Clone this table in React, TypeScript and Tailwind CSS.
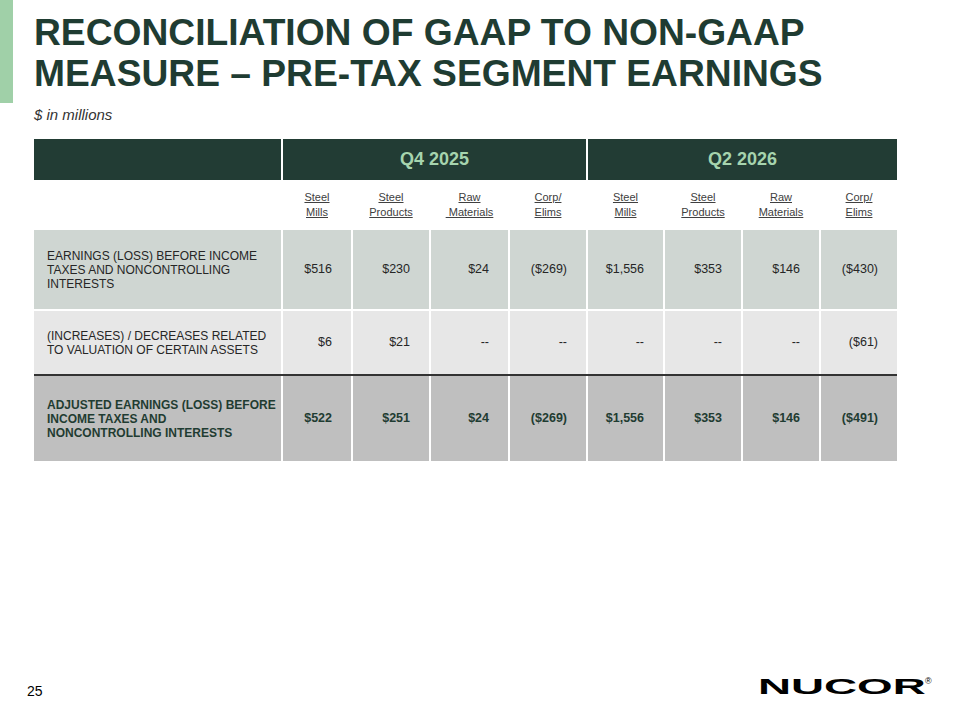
import React from 'react';

type Row = {
  label: string[];
  values: string[];
  kind: 'base' | 'adj' | 'total';
};

const SUB_COLS = [
  ['Steel', 'Mills'],
  ['Steel', 'Products'],
  ['Raw', '\u00a0Materials'],
  ['Corp/', 'Elims'],
  ['Steel', 'Mills'],
  ['Steel', 'Products'],
  ['Raw', 'Materials'],
  ['Corp/', 'Elims'],
];

const ROWS: Row[] = [
  {
    label: ['EARNINGS (LOSS) BEFORE INCOME', 'TAXES AND NONCONTROLLING', 'INTERESTS'],
    values: ['$516', '$230', '$24', '($269)', '$1,556', '$353', '$146', '($430)'],
    kind: 'base',
  },
  {
    label: ['(INCREASES) / DECREASES RELATED', 'TO VALUATION OF CERTAIN ASSETS'],
    values: ['$6', '$21', '--', '--', '--', '--', '--', '($61)'],
    kind: 'adj',
  },
  {
    label: ['ADJUSTED EARNINGS (LOSS) BEFORE', 'INCOME TAXES AND', 'NONCONTROLLING INTERESTS'],
    values: ['$522', '$251', '$24', '($269)', '$1,556', '$353', '$146', '($491)'],
    kind: 'total',
  },
];

const GRID = 'grid grid-cols-[247px_68px_76px_77px_76px_75px_76px_76px_76px] gap-x-[2px]';

const rowStyle = {
  base: { wrap: 'h-[79px]', cell: 'bg-[#cfd6d2] text-[#262626]' },
  adj: { wrap: 'h-[63px]', cell: 'bg-[#e7e7e7] text-[#262626]' },
  total: { wrap: 'h-[85px]', cell: 'bg-[#bfbfbf] text-[#1f3c32] font-bold' },
};

// wordmark: wide bold letters, stretched horizontally
const NucorLogo = () => (
  <svg width="180" height="22" viewBox="0 0 180 22" overflow="visible">
    <g transform="scale(2.08,1)">
      <text
        x="0"
        y="19"
        fontFamily="'Liberation Sans', Arial, sans-serif"
        fontWeight="900"
        fontSize="22"
        fill="#000"
      >
        NUCOR
      </text>
    </g>
    <text x="167" y="9" fontFamily="'Liberation Sans', Arial, sans-serif" fontSize="9" fill="#000">
      ®
    </text>
  </svg>
);

export default function App() {
  return (
    <div className="w-[960px] h-[720px] flex flex-col bg-white font-['Liberation_Sans',Arial,sans-serif] overflow-hidden">
      {/* title block */}
      <div className="flex">
        <div className="w-[13px] h-[103px] bg-[#a0d0a8] shrink-0" />
        <div className="pl-[21px] pt-[12px]">
          <h1 className="text-[37.2px] leading-[41px] font-bold text-[#1f3c32] whitespace-nowrap">
            RECONCILIATION OF GAAP TO NON-GAAP
            <br />
            MEASURE – PRE-TAX SEGMENT EARNINGS
          </h1>
        </div>
      </div>
      <p className="pl-[34px] mt-[3px] text-[15px] leading-[18px] italic text-[#333]">$ in millions</p>

      {/* table */}
      <div className="ml-[34px] mt-[15px] w-[863px]">
        <div className={`${GRID} h-[41px]`}>
          <div className="bg-[#223c34]" />
          <div className="col-span-4 bg-[#223c34] flex items-center justify-center text-[18px] font-bold text-[#a6d4ae]">
            Q4 2025
          </div>
          <div className="col-span-4 bg-[#223c34] flex items-center justify-center text-[18px] font-bold text-[#a6d4ae]">
            Q2 2026
          </div>
        </div>

        <div className={`${GRID} h-[50px]`}>
          <div />
          {SUB_COLS.map((c, i) => (
            <div
              key={i}
              className="flex flex-col items-center justify-center text-[11px] leading-[15px] text-[#404040] underline"
            >
              <span>{c[0]}</span>
              <span>{c[1]}</span>
            </div>
          ))}
        </div>

        <div className="flex flex-col">
          {ROWS.map((r, ri) => {
            const s = rowStyle[r.kind];
            return (
              <React.Fragment key={ri}>
                {ri === 1 && <div className="h-[2px]" />}
                {ri === 2 && <div className="h-[2px] bg-[#333]" />}
                <div className={`${GRID} ${s.wrap}`}>
                  <div className={`${s.cell} pl-[13px] flex flex-col justify-center text-[12px] leading-[14px] whitespace-nowrap`}>
                    {r.label.map((l, li) => (
                      <span key={li}>{l}</span>
                    ))}
                  </div>
                  {r.values.map((v, vi) => (
                    <div
                      key={vi}
                      className={`${s.cell} pr-[19px] flex items-center justify-end text-[12.5px]`}
                    >
                      {v}
                    </div>
                  ))}
                </div>
              </React.Fragment>
            );
          })}
        </div>
      </div>

      {/* footer */}
      <div className="mt-auto mb-[21px] flex items-end justify-between pl-[27px] pr-[22px]">
        <span className="text-[14px] leading-[16px] text-[#000]">25</span>
        <div className="mb-[2px]">
          <NucorLogo />
        </div>
      </div>
    </div>
  );
}
